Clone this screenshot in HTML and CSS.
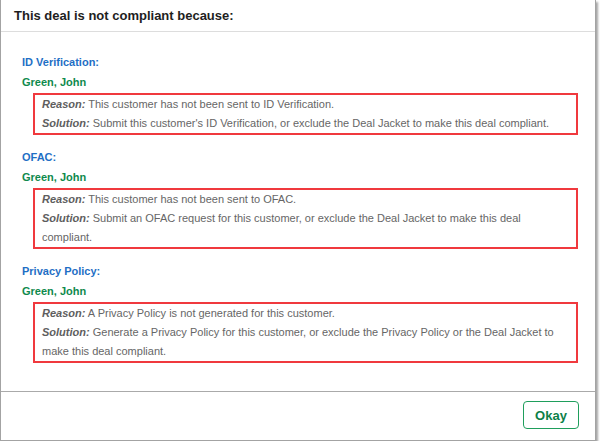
FILE: index.html
```html
<!DOCTYPE html>
<html lang="en">
<head>
  <meta charset="UTF-8">
  <meta name="viewport" content="width=device-width, initial-scale=1.0">
  <title>Compliance</title>
  <link rel="stylesheet" href="styles.css">
</head>
<body>

  <div class="dialog">
    <header class="dialog-header">
      <h1>This deal is not compliant because:</h1>
    </header>

    <div class="dialog-body">
      <!-- ID Verification -->
      <section class="issue">
        <h2>ID Verification:</h2>
        <p class="customer">Green, John</p>
        <div class="details">
          <p><em>Reason:</em> This customer has not been sent to ID Verification.</p>
          <p><em>Solution:</em> Submit this customer's ID Verification, or exclude the Deal Jacket to make this deal compliant.</p>
        </div>
      </section>

      <!-- OFAC -->
      <section class="issue">
        <h2>OFAC:</h2>
        <p class="customer">Green, John</p>
        <div class="details">
          <p><em>Reason:</em> This customer has not been sent to OFAC.</p>
          <p><em>Solution:</em> Submit an OFAC request for this customer, or exclude the Deal Jacket to make this deal compliant.</p>
        </div>
      </section>

      <!-- Privacy Policy -->
      <section class="issue">
        <h2>Privacy Policy:</h2>
        <p class="customer">Green, John</p>
        <div class="details">
          <p><em>Reason:</em> A Privacy Policy is not generated for this customer.</p>
          <p><em>Solution:</em> Generate a Privacy Policy for this customer, or exclude the Privacy Policy or the Deal Jacket to make this deal compliant.</p>
        </div>
      </section>
    </div>

    <footer class="dialog-footer">
      <button class="okay-button">Okay</button>
    </footer>
  </div>

</body>
</html>
```
FILE: styles.css
```css
body {
  font-family: 'Liberation Sans', Arial, sans-serif;
  background-color: #fff;
  margin: 0;
  padding: 0;
}

.dialog {
  width: 594px;
  height: 440px;
  border: 1px solid #a3a3a3;
  border-top: none;
  background: #fff;
  box-shadow: 2px 2px 2px rgba(0, 0, 0, 0.35);
  display: flex;
  flex-direction: column;
}

.dialog-header {
  height: 31px;
  border-bottom: 1px solid #ddd;
  padding: 0 13px;
  display: flex;
  align-items: center;
}

.dialog-header h1 {
  margin: 0;
  font-size: 13px;
  font-weight: bold;
  color: #1e1e1e;
}

.dialog-body {
  flex: 1;
  padding: 20px 20px 0 21px;
}

.issue {
  margin-bottom: 12px;
}

.issue h2 {
  margin: 0;
  font-size: 11px;
  line-height: 20px;
  font-weight: bold;
  color: #1f6fc5;
}

.customer {
  margin: 0;
  font-size: 11px;
  line-height: 20px;
  font-weight: bold;
  color: #0f8a4d;
}

.details {
  margin: 1px 0 0 11px;
  width: 524px;
  border: 2px solid #f0393e;
  padding: 0 10px 0 7px;
}

.details p {
  margin: 0;
  font-size: 11px;
  line-height: 19px;
  color: #666;
}

.details em {
  font-weight: bold;
  color: #5e5e5e;
}

.dialog-footer {
  height: 49px;
  border-top: 1px solid #aaa;
  padding: 9px 16px 0 0;
  box-sizing: border-box;
  display: flex;
  justify-content: flex-end;
  align-items: flex-start;
}

.okay-button {
  width: 56px;
  height: 28px;
  background: #fff;
  border: 1px solid #1f9e5c;
  border-radius: 4px;
  color: #0d7f48;
  font-family: 'Liberation Sans', Arial, sans-serif;
  font-size: 13px;
  font-weight: bold;
  cursor: pointer;
}
```
